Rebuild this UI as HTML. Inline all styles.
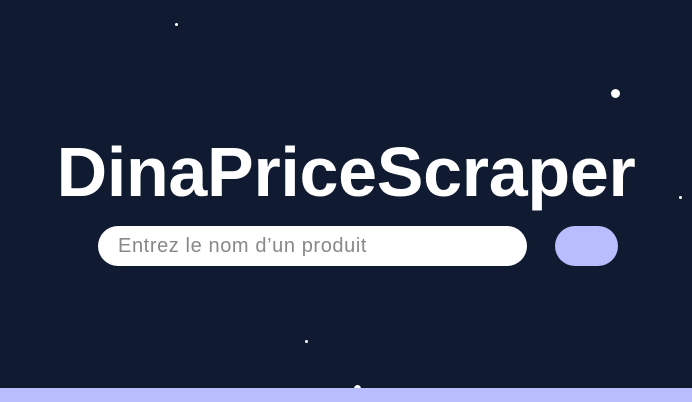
<!DOCTYPE html>
<html><head><meta charset="utf-8"><style>
html,body{margin:0;padding:0}
body{width:692px;height:402px;background:#101a31;position:relative;overflow:hidden;font-family:"Liberation Sans",sans-serif}
.t{position:absolute;left:0;width:692px;top:132px;text-align:center;color:#fff;font-weight:bold;font-size:70px;line-height:80px;letter-spacing:-0.3px}
.in{position:absolute;left:98px;top:226px;width:429px;height:40px;background:#fff;border-radius:20px}
.in span{position:absolute;left:20px;top:9px;font-size:20px;letter-spacing:0.6px;color:#888;}
.bt{position:absolute;left:555px;top:226px;width:63px;height:40px;background:#b8befd;border-radius:20px}
.bar{position:absolute;left:0;top:388px;width:692px;height:14px;background:#b8befd}
.s{position:absolute;background:#fff;border-radius:50%}
</style></head><body>
<div class="s" style="left:175px;top:23px;width:3px;height:3px"></div>
<div class="s" style="left:611px;top:89px;width:9px;height:9px"></div>
<div class="s" style="left:679px;top:196px;width:3px;height:3px"></div>
<div class="s" style="left:305px;top:340px;width:3px;height:3px"></div>
<div class="s" style="left:354px;top:385px;width:7px;height:7px"></div>
<div class="t">DinaPriceScraper</div>
<div class="in"><span>Entrez le nom d’un produit</span></div>
<div class="bt"></div>
<div class="bar"></div>
</body></html>
